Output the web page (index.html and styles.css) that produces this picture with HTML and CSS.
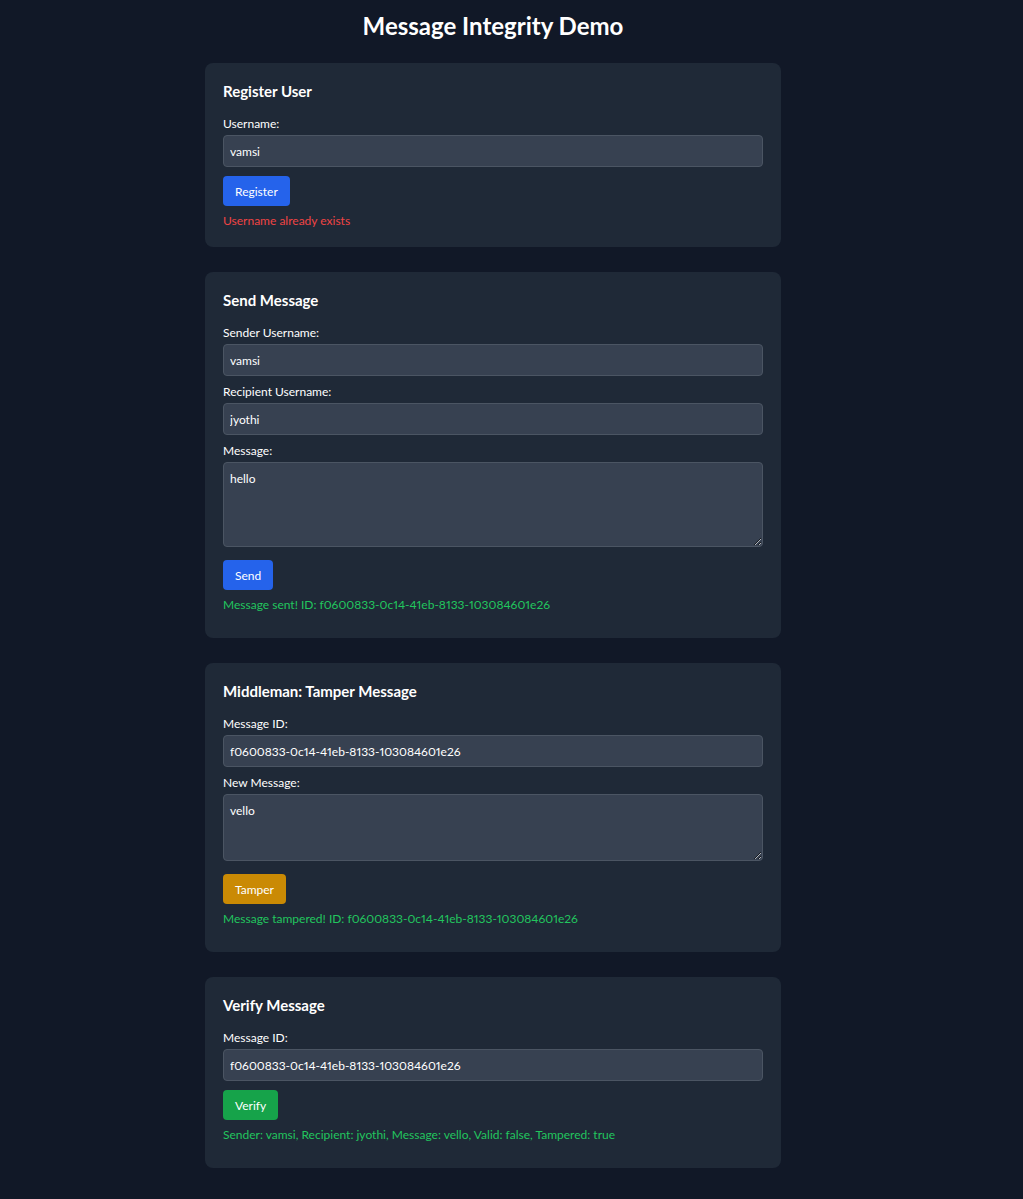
FILE: index.html
```html
<!DOCTYPE html>
<html lang="en">
<head>
<meta charset="utf-8">
<title>Message Integrity Demo</title>
<link rel="stylesheet" href="styles.css">
</head>
<body>
<div class="page">
  <h1 class="title">Message Integrity Demo</h1>

  <section class="card">
    <h2 class="card-title">Register User</h2>
    <div class="group">
      <label class="label">Username:</label>
      <input class="field" type="text" value="vamsi">
    </div>
    <button class="btn btn-blue">Register</button>
    <p class="msg msg-error">Username already exists</p>
  </section>

  <section class="card">
    <h2 class="card-title">Send Message</h2>
    <div class="group">
      <label class="label">Sender Username:</label>
      <input class="field" type="text" value="vamsi">
    </div>
    <div class="group">
      <label class="label">Recipient Username:</label>
      <input class="field" type="text" value="jyothi">
    </div>
    <div class="group group-area">
      <label class="label">Message:</label>
      <textarea class="field area area-tall">hello</textarea>
    </div>
    <button class="btn btn-blue">Send</button>
    <p class="msg msg-ok">Message sent! ID: f0600833-0c14-41eb-8133-103084601e26</p>
  </section>

  <section class="card">
    <h2 class="card-title">Middleman: Tamper Message</h2>
    <div class="group">
      <label class="label">Message ID:</label>
      <input class="field" type="text" value="f0600833-0c14-41eb-8133-103084601e26">
    </div>
    <div class="group group-area">
      <label class="label">New Message:</label>
      <textarea class="field area area-short">vello</textarea>
    </div>
    <button class="btn btn-yellow">Tamper</button>
    <p class="msg msg-ok">Message tampered! ID: f0600833-0c14-41eb-8133-103084601e26</p>
  </section>

  <section class="card">
    <h2 class="card-title">Verify Message</h2>
    <div class="group">
      <label class="label">Message ID:</label>
      <input class="field" type="text" value="f0600833-0c14-41eb-8133-103084601e26">
    </div>
    <button class="btn btn-green">Verify</button>
    <p class="msg msg-ok">Sender: vamsi, Recipient: jyothi, Message: vello, Valid: false, Tampered: true</p>
  </section>
</div>
</body>
</html>
```

FILE: styles.css
```css
html, body {
  margin: 0;
  padding: 0;
  background: #111827;
  color: #f9fafb;
  font-family: Lato, "Noto Sans", sans-serif;
  font-variant-numeric: proportional-nums;
}

.page {
  width: 986px;
  padding-top: 10px;
  padding-bottom: 32px;
}

.title {
  margin: 0 0 21px;
  font-size: 24px;
  line-height: 32px;
  font-weight: 700;
  text-align: center;
  color: #ffffff;
}

.card {
  width: 576px;
  box-sizing: border-box;
  margin: 0 auto 25px;
  padding: 18px 18px 17px;
  background: #1f2937;
  border-radius: 8px;
}

.card-title {
  margin: 0 0 14px;
  font-size: 15px;
  line-height: 20px;
  font-weight: 700;
  color: #ffffff;
}

.group {
  margin-bottom: 7px;
}

.group-area {
  margin-bottom: 13px;
}

.label {
  display: block;
  margin-bottom: 2px;
  font-size: 12px;
  line-height: 18px;
  color: #ffffff;
}

.field {
  display: block;
  width: 100%;
  box-sizing: border-box;
  height: 32px;
  margin: 0;
  padding: 0 6px;
  background: #374151;
  border: 1px solid #4b5563;
  border-radius: 4px;
  color: #ffffff;
  font-family: inherit;
  font-variant-numeric: proportional-nums;
  font-size: 12px;
  outline: none;
  color-scheme: dark;
}

.area {
  padding: 7px 6px;
  line-height: 18px;
  resize: vertical;
}

.area-tall {
  height: 85px;
}

.area-short {
  height: 67px;
}

.btn {
  display: block;
  height: 30px;
  margin: 9px 0 0;
  padding: 0 12px;
  border: none;
  border-radius: 4px;
  color: #ffffff;
  font-family: inherit;
  font-size: 12px;
}

.btn-blue { background: #2563eb; }
.btn-yellow { background: #ca8a04; }
.btn-green { background: #16a34a; }

.msg {
  margin: 6px 0 0;
  font-size: 12px;
  line-height: 18px;
}

.msg-error { color: #ef4444; }

.msg-ok {
  color: #22c55e;
  margin-bottom: 7px;
}
```
